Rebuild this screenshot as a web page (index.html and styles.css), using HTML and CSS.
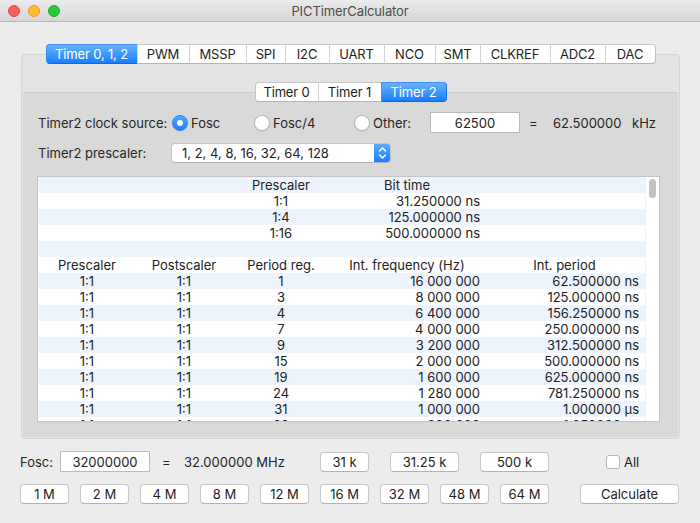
FILE: index.html
```html
<!DOCTYPE html>
<html>
<head>
<meta charset="utf-8">
<title>PICTimerCalculator</title>
<link rel="stylesheet" href="styles.css">
</head>
<body>
<div class="window">
  <div class="titlebar">
    <div class="lights">
      <span class="light red"></span>
      <span class="light yellow"></span>
      <span class="light green"></span>
    </div>
    <div class="title">PICTimerCalculator</div>
    <div></div>
  </div>

  <div class="outer">
    <div class="tabs">
      <div class="tab sel" style="width:91px">Timer 0, 1, 2</div>
      <div class="tab" style="width:52px">PWM</div>
      <div class="tab" style="width:57px">MSSP</div>
      <div class="tab" style="width:39px">SPI</div>
      <div class="tab" style="width:44px">I2C</div>
      <div class="tab" style="width:55px">UART</div>
      <div class="tab" style="width:51px">NCO</div>
      <div class="tab" style="width:45px">SMT</div>
      <div class="tab" style="width:70px">CLKREF</div>
      <div class="tab" style="width:55px">ADC2</div>
      <div class="tab" style="width:51px">DAC</div>
    </div>

    <div class="inner">
      <div class="tabs subtabs">
        <div class="tab" style="width:63px">Timer 0</div>
        <div class="tab" style="width:63px">Timer 1</div>
        <div class="tab sel" style="width:66px">Timer 2</div>
      </div>

      <div class="row clock">
        <span class="lbl lbl-clock">Timer2 clock source:</span>
        <span class="radio r-fosc"><span class="rb on"></span>Fosc</span>
        <span class="radio r-fosc4"><span class="rb"></span>Fosc/4</span>
        <span class="radio r-other"><span class="rb"></span>Other:</span>
        <span class="field other-field">62500</span>
        <span class="eq eq1">=</span>
        <span class="val val1">62.500000</span>
        <span class="unit">kHz</span>
      </div>

      <div class="row presc">
        <span class="lbl lbl-presc">Timer2 prescaler:</span>
        <span class="popup">
          <span class="popup-text">1, 2, 4, 8, 16, 32, 64, 128</span>
          <span class="popup-arrows">
            <svg width="17" height="20" viewBox="0 0 17 20">
              <path d="M5.5 8 L8.5 5 L11.5 8" fill="none" stroke="#fff" stroke-width="1.4" stroke-linecap="round" stroke-linejoin="round"/>
              <path d="M5.5 12 L8.5 15 L11.5 12" fill="none" stroke="#fff" stroke-width="1.4" stroke-linecap="round" stroke-linejoin="round"/>
            </svg>
          </span>
        </span>
      </div>

      <div class="table">
        <div class="rows">
          <div class="tr"><span></span><span></span><span class="c">Prescaler</span><span class="c">Bit time</span><span></span></div>
          <div class="tr"><span></span><span></span><span class="c">1:1</span><span class="r">31.250000 ns</span><span></span></div>
          <div class="tr"><span></span><span></span><span class="c">1:4</span><span class="r">125.000000 ns</span><span></span></div>
          <div class="tr"><span></span><span></span><span class="c">1:16</span><span class="r">500.000000 ns</span><span></span></div>
          <div class="tr"><span></span><span></span><span></span><span></span><span></span></div>
          <div class="tr"><span class="c">Prescaler</span><span class="c">Postscaler</span><span class="c">Period reg.</span><span class="c">Int. frequency (Hz)</span><span class="c">Int. period</span></div>
          <div class="tr"><span class="c">1:1</span><span class="c">1:1</span><span class="c">1</span><span class="r">16 000 000</span><span class="r">62.500000 ns</span></div>
          <div class="tr"><span class="c">1:1</span><span class="c">1:1</span><span class="c">3</span><span class="r">8 000 000</span><span class="r">125.000000 ns</span></div>
          <div class="tr"><span class="c">1:1</span><span class="c">1:1</span><span class="c">4</span><span class="r">6 400 000</span><span class="r">156.250000 ns</span></div>
          <div class="tr"><span class="c">1:1</span><span class="c">1:1</span><span class="c">7</span><span class="r">4 000 000</span><span class="r">250.000000 ns</span></div>
          <div class="tr"><span class="c">1:1</span><span class="c">1:1</span><span class="c">9</span><span class="r">3 200 000</span><span class="r">312.500000 ns</span></div>
          <div class="tr"><span class="c">1:1</span><span class="c">1:1</span><span class="c">15</span><span class="r">2 000 000</span><span class="r">500.000000 ns</span></div>
          <div class="tr"><span class="c">1:1</span><span class="c">1:1</span><span class="c">19</span><span class="r">1 600 000</span><span class="r">625.000000 ns</span></div>
          <div class="tr"><span class="c">1:1</span><span class="c">1:1</span><span class="c">24</span><span class="r">1 280 000</span><span class="r">781.250000 ns</span></div>
          <div class="tr"><span class="c">1:1</span><span class="c">1:1</span><span class="c">31</span><span class="r">1 000 000</span><span class="r">1.000000 µs</span></div>
          <div class="tr"><span class="c">1:1</span><span class="c">1:1</span><span class="c">39</span><span class="r">800 000</span><span class="r">1.250000 µs</span></div>
        </div>
        <div class="scrollbar"><div class="thumb"></div></div>
      </div>
    </div>
  </div>

  <div class="bottom">
    <div class="brow brow1">
      <span class="fosc-lbl">Fosc:</span>
      <span class="field fosc-field">32000000</span>
      <span class="eq eq2">=</span>
      <span class="fosc-val">32.000000 MHz</span>
      <span class="btn b49 m31k">31 k</span>
      <span class="btn b69 m3125">31.25 k</span>
      <span class="btn b69 m500">500 k</span>
      <span class="check"><span class="cb"></span>All</span>
    </div>
    <div class="brow brow2">
      <span class="btn b49">1 M</span>
      <span class="btn b49">2 M</span>
      <span class="btn b49">4 M</span>
      <span class="btn b49">8 M</span>
      <span class="btn b49">12 M</span>
      <span class="btn b49">16 M</span>
      <span class="btn b49">32 M</span>
      <span class="btn b49">48 M</span>
      <span class="btn b49">64 M</span>
      <span class="btn calc">Calculate</span>
    </div>
  </div>
</div>
</body>
</html>
```

FILE: styles.css
```css
* { box-sizing: border-box; }
html, body { margin: 0; padding: 0; }
body {
  width: 700px;
  height: 523px;
  overflow: hidden;
  background: #ececec;
  font-family: "Inter", "Liberation Sans", sans-serif;
  font-size: 13px;
  color: #242424;
}
.window { width: 700px; height: 523px; background: #ececec; }

/* title bar */
.titlebar {
  height: 22px;
  display: grid;
  grid-template-columns: 1fr auto 1fr;
  align-items: center;
  background: linear-gradient(#ebebeb, #d6d6d6);
  border-bottom: 1px solid #b8b8b8;
}
.lights { display: flex; gap: 8px; padding-left: 8px; padding-top: 1px; }
.light { width: 12px; height: 12px; border-radius: 50%; display: block; }
.red { background: #fc5f57; border: 0.5px solid #de4a42; }
.yellow { background: #fdbc2e; border: 0.5px solid #dea123; }
.green { background: #28c840; border: 0.5px solid #1dac2c; }
.title { color: #4d4d4d; font-size: 13px; letter-spacing: -0.1px; }

/* outer tab box */
.outer {
  margin: 32px 0 0 21px;
  width: 659px;
  height: 385px;
  background: #e3e3e3;
  border: 1px solid #d6d6d6;
  border-radius: 4px;
  padding: 0 1px;
}
.tabs {
  display: flex;
  justify-content: center;
  margin-top: -11px;
  height: 20px;
}
.tab {
  height: 20px;
  line-height: 19px;
  text-align: center;
  background: #fff;
  border-top: 1px solid #c8c8c8;
  border-bottom: 1px solid #b4b4b4;
  border-left: 1px solid #d4d4d4;
  color: #1e1e1e;
  letter-spacing: -0.15px;
  white-space: nowrap;
}
.tab:first-child { border-left: 1px solid #c2c2c2; border-radius: 4px 0 0 4px; }
.tab:last-child { border-right: 1px solid #c2c2c2; border-radius: 0 4px 4px 0; }
.tab.sel {
  background: linear-gradient(#6bb2fb, #167ffb);
  color: #fff;
  border-color: #3c8ff7 #1d74e6 #0f68dd #3c8ff7;
}

.inner {
  margin-top: 28px;
  height: 345px;
  background: #d9d9d9;
  border-top: 1px solid #cbcbcb;
  border-radius: 2px;
  padding: 0 0 0 14px;
}
.subtabs { margin-left: -14px; }

.row { display: flex; align-items: center; }
.clock { margin-top: 10px; height: 21px; padding-left: 1px; }
.lbl { color: #262626; }
.lbl-clock { width: 134px; }
.radio { display: flex; align-items: center; }
.rb {
  width: 16px; height: 16px; border-radius: 50%;
  background: #fff;
  border: 1px solid #b7b7b7;
  box-shadow: 0 0.5px 1px rgba(0,0,0,0.12);
  margin-right: 3px;
  display: flex; align-items: center; justify-content: center;
}
.rb.on {
  background: linear-gradient(#54a8fd, #1c80fb);
  border-color: #2a86f5;
}
.rb.on::after {
  content: "";
  width: 6px; height: 6px; border-radius: 50%; background: #fff;
}
.r-fosc { width: 82px; }
.r-fosc4 { width: 100px; }
.r-other { width: 76px; }
.field {
  display: block;
  background: #fff;
  border: 1px solid #b9b9b9;
  text-align: center;
  height: 21px;
  line-height: 20px;
  color: #222;
}
.other-field { width: 90px; }
.eq1 { margin-left: 9px; width: 24px; }
.val1 { width: 79px; }

.presc { margin-top: 10px; height: 20px; padding-left: 1px; }
.lbl-presc { width: 133px; }
.popup {
  width: 220px; height: 20px;
  display: flex;
  background: #fff;
  border: 1px solid #c4c4c4;
  border-bottom-color: #b0b0b0;
  border-radius: 4px;
  overflow: hidden;
}
.popup-text { flex: 1; padding-left: 10px; line-height: 18px; color: #222; }
.popup-arrows {
  width: 17px;
  background: linear-gradient(#62adfb, #167ffb);
  display: flex; align-items: center; justify-content: center;
  margin: -1px -1px -1px 0;
}

/* table */
.table {
  margin-top: 13px;
  width: 623px;
  height: 246px;
  border: 1px solid #c4c4c4;
  background: #fff;
  display: flex;
}
.rows { width: 607px; height: 244px; overflow: hidden; }
.tr {
  display: grid;
  grid-template-columns: 98px 96px 98px 154px 161px;
  height: 16px;
  line-height: 16px;
  font-size: 13px;
  color: #222;
}
.tr:nth-child(odd) { background: #eef4fe; }
.tr .c { text-align: center; }
.tr .r { text-align: right; }
.tr span:nth-child(4).r { padding-right: 4px; }
.tr span:nth-child(5).r { padding-right: 6px; }
.scrollbar {
  width: 14px;
  background: #fff;
  border-left: 1px solid #f2f2f2;
  padding: 2px 0 0 3px;
}
.thumb { width: 7px; height: 19px; border-radius: 4px; background: #c2c2c2; }

/* bottom */
.bottom { padding: 12px 0 0 20px; }
.brow { display: flex; align-items: center; }
.brow1 { height: 21px; }
.brow2 { margin-top: 11px; height: 21px; gap: 11px; }
.fosc-lbl { width: 40px; }
.fosc-field { width: 90px; }
.eq2 { margin-left: 12px; width: 22px; }
.fosc-val { width: 136px; }
.btn {
  display: block;
  height: 20px;
  line-height: 18px;
  text-align: center;
  background: #fff;
  border: 1px solid #c8c8c8;
  border-bottom-color: #b3b3b3;
  border-radius: 4px;
  color: #222;
  white-space: nowrap;
}
.b49 { width: 49px; }
.b69 { width: 69px; }
.m3125 { margin-left: 21px; }
.m500 { margin-left: 21px; }
.check { display: flex; align-items: center; margin-left: 57px; }
.cb {
  width: 14px; height: 14px;
  background: #fff;
  border: 1px solid #b5b5b5;
  border-radius: 3px;
  margin-right: 4px;
}
.calc { width: 99px; margin-left: 20px; }
```
